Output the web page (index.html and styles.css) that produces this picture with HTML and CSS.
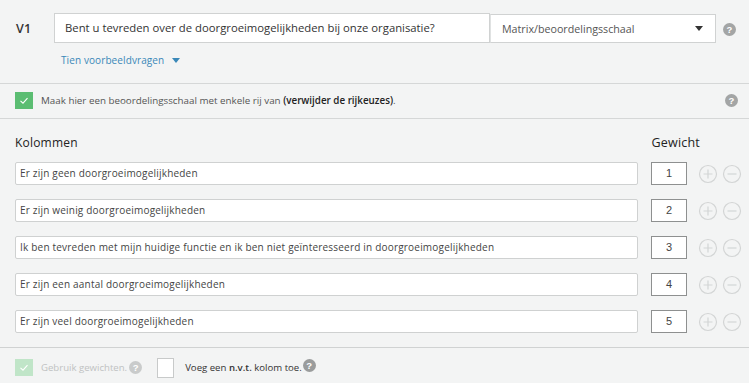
FILE: index.html
```html
<!DOCTYPE html>
<html>
<head>
<meta charset="utf-8">
<link rel="stylesheet" href="styles.css">
</head>
<body>
<div class="page">
  <section class="qhead">
    <div class="qrow">
      <div class="qnum">V1</div>
      <div class="qinput">Bent u tevreden over de doorgroeimogelijkheden bij onze organisatie?</div>
      <div class="qselect"><span>Matrix/beoordelingsschaal</span><span class="caret"></span></div>
      <span class="help help-top">?</span>
    </div>
    <div class="examples">Tien voorbeeldvragen <span class="caret blue"></span></div>
  </section>
  <section class="single">
    <span class="check on"><svg viewBox="0 0 18 17" width="18" height="17"><path d="M5.5 8.8 L8 11.2 L12.5 6.2" fill="none" stroke="#fff" stroke-width="1.1"/></svg></span>
    <span class="single-text">Maak hier een beoordelingsschaal met enkele rij van <b>(verwijder de rijkeuzes)</b>.</span>
    <span class="help help-single">?</span>
  </section>
  <section class="cols">
    <div class="cols-head"><span>Kolommen</span><span class="wh">Gewicht</span></div>
    <div class="row"><div class="cinput">Er zijn geen doorgroeimogelijkheden</div><div class="weight">1</div><span class="circ"><svg viewBox="0 0 20 20"><circle cx="10" cy="10" r="8.5"/><path d="M5.5 10h9M10 5.5v9"/></svg></span><span class="circ"><svg viewBox="0 0 20 20"><circle cx="10" cy="10" r="8.5"/><path d="M5.5 10h9"/></svg></span></div>
    <div class="row"><div class="cinput">Er zijn weinig doorgroeimogelijkheden</div><div class="weight">2</div><span class="circ"><svg viewBox="0 0 20 20"><circle cx="10" cy="10" r="8.5"/><path d="M5.5 10h9M10 5.5v9"/></svg></span><span class="circ"><svg viewBox="0 0 20 20"><circle cx="10" cy="10" r="8.5"/><path d="M5.5 10h9"/></svg></span></div>
    <div class="row"><div class="cinput">Ik ben tevreden met mijn huidige functie en ik ben niet geïnteresseerd in doorgroeimogelijkheden</div><div class="weight">3</div><span class="circ"><svg viewBox="0 0 20 20"><circle cx="10" cy="10" r="8.5"/><path d="M5.5 10h9M10 5.5v9"/></svg></span><span class="circ"><svg viewBox="0 0 20 20"><circle cx="10" cy="10" r="8.5"/><path d="M5.5 10h9"/></svg></span></div>
    <div class="row"><div class="cinput">Er zijn een aantal doorgroeimogelijkheden</div><div class="weight">4</div><span class="circ"><svg viewBox="0 0 20 20"><circle cx="10" cy="10" r="8.5"/><path d="M5.5 10h9M10 5.5v9"/></svg></span><span class="circ"><svg viewBox="0 0 20 20"><circle cx="10" cy="10" r="8.5"/><path d="M5.5 10h9"/></svg></span></div>
    <div class="row"><div class="cinput">Er zijn veel doorgroeimogelijkheden</div><div class="weight">5</div><span class="circ"><svg viewBox="0 0 20 20"><circle cx="10" cy="10" r="8.5"/><path d="M5.5 10h9M10 5.5v9"/></svg></span><span class="circ"><svg viewBox="0 0 20 20"><circle cx="10" cy="10" r="8.5"/><path d="M5.5 10h9"/></svg></span></div>
  </section>
  <section class="foot">
    <span class="check light"><svg viewBox="0 0 18 17" width="18" height="17"><path d="M5.5 8.8 L8 11.2 L12.5 6.2" fill="none" stroke="#fff" stroke-width="1.1"/></svg></span>
    <span class="muted">Gebruik gewichten.</span><span class="help help-light">?</span>
    <span class="check empty"></span>
    <span class="dark">Voeg een <b>n.v.t.</b> kolom toe.</span><span class="help help-dark">?</span>
  </section>
</div>
</body>
</html>
```
FILE: styles.css
```css
html, body { margin: 0; padding: 0; }
body {
  background: #f3f4f4;
  font-family: "Open Sans", "Liberation Sans", sans-serif;
  color: #4a4a4a;
  width: 749px;
  height: 383px;
  overflow: hidden;
}
.page { width: 749px; }
.qhead {
  padding: 13px 0 0 0;
  height: 84px;
  box-sizing: border-box;
  border-bottom: 1px solid #d5d7d7;
}
.qrow { display: flex; align-items: center; height: 30px; }
.qnum {
  width: 54px;
  padding-left: 16px;
  box-sizing: border-box;
  font-size: 12.5px;
  font-weight: 600;
  color: #333;
  letter-spacing: 0.2px;
}
.qinput {
  width: 436px;
  height: 30px;
  box-sizing: border-box;
  background: #fff;
  border: 1px solid #d0d2d2;
  padding: 0 10px;
  line-height: 28px;
  font-size: 11.3px;
  color: #333;
  white-space: nowrap;
  overflow: hidden;
}
.qselect {
  width: 226px;
  height: 29px;
  margin-top: 1px;
  box-sizing: border-box;
  background: #fff;
  border: 1px solid #d0d2d2;
  border-left: 1px solid #e0e2e2;
  display: flex;
  align-items: center;
  justify-content: space-between;
  padding: 0 12px 0 11px;
  font-size: 10.7px;
  color: #555;
}
.caret {
  display: inline-block;
  width: 0; height: 0;
  border-left: 4.5px solid transparent;
  border-right: 4.5px solid transparent;
  border-top: 5px solid #333;
}
.caret.blue { border-top-color: #3a88b8; margin-left: 5px; vertical-align: 1px; }
.help {
  display: inline-flex;
  align-items: center;
  justify-content: center;
  width: 13px; height: 13px;
  border-radius: 50%;
  background: #a3a5a5;
  color: #fff;
  font-family: "Liberation Sans", sans-serif;
  font-weight: 700;
  font-size: 9.5px;
  line-height: 13px;
}
.help-top { margin-left: 7px; margin-top: 2px; }
.examples {
  margin: 10px 0 0 61px;
  font-size: 10px;
  color: #3a88b8;
  letter-spacing: 0.1px;
}
.single {
  height: 35px;
  box-sizing: border-box;
  border-bottom: 1px solid #d5d7d7;
  display: flex;
  align-items: center;
  padding: 0 11px 2px 15px;
}
.check {
  width: 18px; height: 17px;
  flex: none;
  display: inline-block;
  box-sizing: border-box;
}
.check svg { display: block; }
.check.on { background: #5bbd72; }
.check.light { background: #c0e5c8; }
.check.empty { background: #fff; border: 1px solid #c8caca; width: 17px; height: 20px; margin-left: 15px; }
.single-text {
  margin-left: 8px;
  font-size: 9.8px;
  color: #555;
  flex: 1;
}
.single-text b { color: #222; font-weight: 600; }
.cols { padding: 0 0 0 15px; height: 229px; box-sizing: border-box; border-bottom: 1px solid #d0d2d2; }
.cols-head {
  display: flex;
  height: 43px;
  align-items: center;
  padding-top: 3px;
  box-sizing: border-box;
  font-size: 12px;
  color: #222;
  letter-spacing: 0.2px;
}
.cols-head .wh { margin-left: auto; margin-right: 49px; font-size: 12.5px; }
.row {
  display: flex;
  align-items: center;
  height: 23px;
  margin-bottom: 14px;
}
.cinput {
  width: 623px;
  height: 23px;
  box-sizing: border-box;
  background: #fff;
  border: 1px solid #cfd1d1;
  border-radius: 2px;
  padding: 0 4px;
  line-height: 21px;
  font-size: 10px;
  color: #444;
  letter-spacing: 0.2px;
  white-space: nowrap;
  overflow: hidden;
}
.weight {
  margin-left: 13px;
  width: 36px;
  height: 23px;
  box-sizing: border-box;
  background: #fff;
  border: 1px solid #8e9090;
  text-align: center;
  line-height: 21px;
  font-family: "Liberation Sans", sans-serif;
  font-size: 11px;
  color: #444;
}
.circ { width: 20px; height: 20px; display: inline-block; }
.circ + .circ { margin-left: 4px; }
.weight + .circ { margin-left: 11px; }
.circ svg { width: 20px; height: 20px; display: block; fill: none; stroke: #d3d5d5; stroke-width: 1.2; }
.foot {
  display: flex;
  align-items: center;
  height: 35px;
  padding: 4px 0 0 15px;
  box-sizing: border-box;
  font-size: 9.6px;
}
.muted { color: #c0c2c2; margin-left: 8px; }
.help-light { background: #c9cbcb; margin-left: 2px; }
.dark { color: #333; margin-left: 11px; }
.dark b { font-weight: 600; }
.help-dark { background: #9a9c9c; margin-left: 1px; margin-top: -4px; }
```
